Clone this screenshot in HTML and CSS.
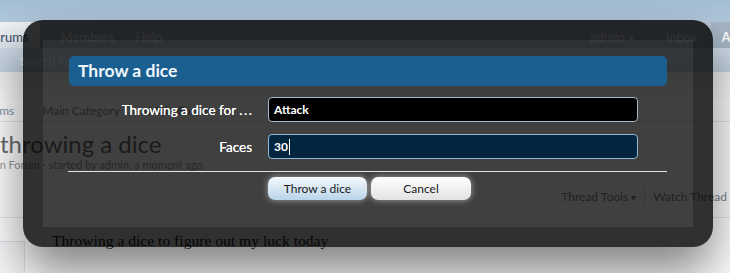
FILE: index.html
```html
<!DOCTYPE html>
<html>
<head>
<meta charset="utf-8">
<link rel="stylesheet" href="styles.css">
</head>
<body>
<div class="page">
  <div class="header"></div>
  <nav class="navbar">
    <span class="tab selected">Forums</span>
    <span class="tab">Members</span>
    <span class="tab">Help</span>
    <span class="tab visitor">admin <span class="arrow">▾</span></span>
    <span class="tab inbox">Inbox</span>
    <span class="tab alerts">Alerts</span>
  </nav>
  <div class="subnav"><span>Search Forums</span></div>
  <div class="content">
    <div class="breadcrumb"><span class="crumb first">Forums</span><span class="crumb">Main Category</span><span class="crumb">Main Forum</span></div>
    <h1 class="thread-title">throwing a dice</h1>
    <div class="meta">in Forum · started by admin, a moment ago</div>
    <div class="tools"><span>Thread Tools <span class="arrow">▾</span></span><span class="sep"></span><span>Watch Thread</span></div>
    <div class="post">
      <div class="userbox"></div>
      <div class="message">Throwing a dice to figure out my luck today</div>
    </div>
  </div>
</div>

<div class="overlay">
  <h2 class="ov-title">Throw a dice</h2>
  <div class="ov-form">
    <div class="ov-row">
      <span class="ov-label">Throwing a dice for <span class="dots">...</span></span>
      <div class="ov-input dark">Attack</div>
    </div>
    <div class="ov-row second">
      <span class="ov-label">Faces</span>
      <div class="ov-input focus">30<span class="caret"></span></div>
    </div>
    <div class="ov-line"></div>
    <div class="ov-buttons">
      <span class="btn primary">Throw a dice</span>
      <span class="btn">Cancel</span>
    </div>
  </div>
</div>
</body>
</html>
```

FILE: styles.css
```css
html, body {
  margin: 0;
  padding: 0;
  width: 730px;
  height: 273px;
  overflow: hidden;
  background: #ffffff;
  font-family: Lato, "Liberation Sans", sans-serif;
}

.page {
  width: 730px;
}

.header {
  height: 22px;
  background: linear-gradient(#a4bfd6, #b3c9dc);
}

.navbar {
  height: 26px;
  background: linear-gradient(#b9c6d2, #aebdcb);
  display: flex;
  align-items: stretch;
  font-size: 13px;
  color: #ffffff;
}

.tab {
  display: flex;
  align-items: center;
  padding: 4px 10px 0;
}

.tab.selected {
  margin-left: -24px;
  background: linear-gradient(#f1f4f7, #dce4eb);
  color: #3b4d60;
  border-radius: 4px 4px 0 0;
  padding-right: 12px;
}

.tab:nth-child(2) {
  margin-left: 10px;
}

.tab:nth-child(3) {
  margin-left: 1px;
}

.tab.visitor {
  margin-left: auto;
}

.tab .arrow {
  font-size: 10px;
  margin-left: 4px;
}

.tab.inbox {
  margin-left: 12px;
}

.tab.alerts {
  margin-left: 4px;
  font-weight: bold;
  background: #a7b7c6;
  margin-right: -36px;
}

.subnav {
  height: 24px;
  background: linear-gradient(#d0dde8, #c3d3e2);
  font-size: 12px;
  color: #f4f8fb;
  display: flex;
  align-items: center;
  padding-left: 20px;
}

.content {
  box-sizing: border-box;
  background: linear-gradient(#eef0f2, #ffffff 30px);
  height: 201px;
  padding-top: 28px;
  overflow: hidden;
}

.breadcrumb {
  display: flex;
  height: 21px;
  align-items: center;
  border-bottom: 1px solid #e3e7eb;
  font-size: 12px;
  color: #7f92a5;
  margin-left: -25px;
}

.crumb {
  padding-right: 28px;
}

.thread-title {
  margin: 8px 0 0 0;
  font-weight: normal;
  font-size: 24px;
  line-height: 28px;
  color: #6b6b6b;
}

.meta {
  margin-left: -3px;
  font-size: 11px;
  color: #9a9a9a;
  line-height: 14px;
}

.tools {
  display: flex;
  justify-content: flex-end;
  align-items: center;
  gap: 8px;
  margin-top: 15px;
  padding-right: 3px;
  font-size: 12px;
  color: #7d8590;
  height: 18px;
  border-bottom: 1px solid #e6e9ec;
  padding-bottom: 12px;
}

.tools .arrow {
  font-size: 10px;
}

.tools .sep {
  width: 1px;
  height: 14px;
  background: #d0d4d8;
}

.post {
  display: flex;
  margin-top: 10px;
}

.userbox {
  width: 24px;
  height: 40px;
  margin-top: 13px;
  border: 1px solid #dfe3e7;
  border-left: none;
  background: #f7f8f9;
}

.message {
  margin-left: 27px;
  font-family: "Liberation Serif", "DejaVu Serif", serif;
  font-size: 15.6px;
  color: #222222;
  line-height: 18px;
  margin-top: 4px;
}

/* overlay */
.overlay {
  position: absolute;
  left: 23px;
  top: 20px;
  width: 600px;
  height: 157px;
  padding: 15px 25px;
  border: 20px solid rgba(0, 0, 0, 0.25);
  border-radius: 20px;
  background: rgba(0, 0, 0, 0.75);
  box-shadow: 0 25px 50px rgba(0, 0, 0, 0.5);
  color: #eeeeee;
}

.ov-title {
  margin: 1px 1px 0;
  height: 30px;
  line-height: 30px;
  padding-left: 9px;
  background: #1b5f91;
  border-radius: 5px;
  font-size: 17.5px;
  font-weight: bold;
  color: #f0f7fc;
}

.ov-row {
  display: grid;
  grid-template-columns: 184px 370px;
  column-gap: 16px;
  align-items: center;
  margin-top: 11px;
}

.ov-row.second {
  margin-top: 12px;
}

.ov-label {
  text-align: right;
  font-size: 13.5px;
  color: #ffffff;
  text-shadow: 0 0 0.4px #ffffff;
}

.dots {
  letter-spacing: 1.6px;
  margin-right: -1.6px;
}

.ov-input {
  box-sizing: border-box;
  height: 25px;
  border-radius: 4px;
  padding-left: 5px;
  display: flex;
  align-items: center;
  font-size: 12px;
  font-weight: bold;
  color: #ffffff;
}

.ov-input.dark {
  background: #000000;
  border: 1px solid #a8b8c6;
}

.ov-input.focus {
  background: #02263f;
  border: 1px solid #93b9d6;
}

.caret {
  display: inline-block;
  width: 1px;
  height: 16px;
  background: #ffffff;
  margin-left: 1px;
}

.ov-line {
  margin-top: 12px;
  border-top: 1px solid #dbe5ee;
  width: 599px;
}

.ov-buttons {
  display: flex;
  gap: 4px;
  margin-top: 5px;
  margin-left: 200px;
}

.btn {
  box-sizing: border-box;
  width: 100px;
  height: 23px;
  border-radius: 7px;
  display: flex;
  align-items: center;
  justify-content: center;
  font-size: 12px;
  color: #1a1a1a;
  background: linear-gradient(#ffffff, #e2e2e2);
  box-shadow: 0 0 6px rgba(255, 255, 255, 0.55);
}

.btn.primary {
  width: 99px;
  background: linear-gradient(#f6f9fc, #b9d4e9);
}
```
